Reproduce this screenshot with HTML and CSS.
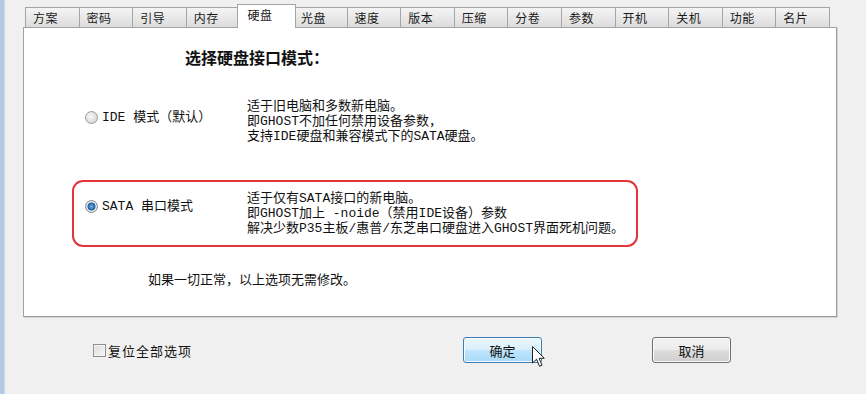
FILE: index.html
```html
<!DOCTYPE html>
<html lang="zh-CN">
<head>
<meta charset="utf-8">
<title>硬盘</title>
<link rel="stylesheet" href="styles.css">
</head>
<body>
<div class="frame">
  <div class="tabs">
    <div class="tab">方案</div>
    <div class="tab">密码</div>
    <div class="tab">引导</div>
    <div class="tab">内存</div>
    <div class="tab selected">硬盘</div>
    <div class="tab">光盘</div>
    <div class="tab">速度</div>
    <div class="tab">版本</div>
    <div class="tab">压缩</div>
    <div class="tab">分卷</div>
    <div class="tab">参数</div>
    <div class="tab">开机</div>
    <div class="tab">关机</div>
    <div class="tab">功能</div>
    <div class="tab">名片</div>
  </div>
  <div class="panel">
    <h1 class="title">选择硬盘接口模式：</h1>
    <div class="option ide">
      <div class="choice"><span class="radio"></span><span class="label">IDE 模式（默认）</span></div>
      <div class="desc">适于旧电脑和多数新电脑。<br>即GHOST不加任何禁用设备参数，<br>支持IDE硬盘和兼容模式下的SATA硬盘。</div>
    </div>
    <div class="option sata">
      <div class="choice"><span class="radio checked"></span><span class="label">SATA 串口模式</span></div>
      <div class="desc">适于仅有SATA接口的新电脑。<br>即GHOST加上 -noide（禁用IDE设备）参数<br>解决少数P35主板/惠普/东芝串口硬盘进入GHOST界面死机问题。</div>
    </div>
    <p class="note">如果一切正常，以上选项无需修改。</p>
  </div>
  <div class="footer">
    <label class="check"><span class="box"></span><span>复位全部选项</span></label>
    <button class="btn hover">确定</button>
    <span></span>
    <button class="btn">取消</button>
  </div>
  <svg class="cursor" width="14" height="22" viewBox="0 0 14 22"><path d="M0.5 0.5 L0.5 17 L4.6 13.2 L7.5 20.3 L10 19.2 L7.1 12.3 L12.3 12.3 Z" fill="#fff" stroke="#222" stroke-width="1" stroke-linejoin="round"/></svg>
</div>
</body>
</html>
```

FILE: styles.css
```css
html, body {
  margin: 0;
  padding: 0;
}
body {
  width: 866px;
  height: 394px;
  overflow: hidden;
  background: #f0f0f0;
  font-family: "Noto Sans CJK SC", "Noto Sans", sans-serif;
  color: #111;
}
.frame {
  position: relative;
  height: 394px;
  box-sizing: border-box;
  border-left: 4px solid #b3c9e4;
  box-shadow: inset 1px 0 0 #c9d8ea;
  padding-left: 19px;
}
.tabs {
  display: flex;
  align-items: flex-end;
  height: 27px;
  margin-left: 2px;
  position: relative;
  z-index: 2;
}
.tab {
  box-sizing: border-box;
  width: 54.6px;
  height: 20px;
  margin-right: -1px;
  border: 1px solid #a5a5a5;
  border-bottom: none;
  background: linear-gradient(#f4f4f4, #e6e6e6 60%, #dcdcdc);
  font-size: 12px;
  letter-spacing: 0.5px;
  line-height: 19px;
  padding-left: 7px;
  color: #1a1a1a;
}
.tab.selected {
  position: relative;
  width: 58.6px;
  height: 24px;
  margin-left: -2px;
  margin-right: -3px;
  margin-bottom: -1px;
  background: #fff;
  line-height: 19px;
  padding-left: 9px;
}
.panel {
  position: relative;
  z-index: 1;
  box-sizing: border-box;
  width: 814px;
  height: 290px;
  background: #fff;
  border: 1px solid #a3a3a3;
  border-right-color: #9a9a9a;
  border-bottom-color: #9a9a9a;
  box-shadow: 1px 1px 0 #d6d6d6;
  padding-top: 19px;
}
.title {
  margin: 0 0 32px 161px;
  font-size: 16px;
  font-weight: bold;
  line-height: 20px;
  letter-spacing: 0;
}
.option {
  display: flex;
  font-family: "Liberation Mono", "Noto Sans CJK SC", monospace;
  font-size: 13px;
}
.choice {
  display: flex;
  align-items: center;
  height: 15px;
  gap: 4px;
}
.label {
  line-height: 15px;
  white-space: nowrap;
}
.desc {
  line-height: 15px;
  white-space: nowrap;
}
.ide {
  margin-left: 61px;
}
.ide .choice {
  width: 162px;
  margin-top: 11px;
}
.sata {
  box-sizing: border-box;
  width: 566px;
  margin: 36px 0 0 48px;
  padding: 9px 0 9px 11px;
  border: 2px solid #e3343c;
  border-radius: 11px;
}
.sata .choice {
  width: 162px;
  margin-top: 8px;
}
.radio {
  box-sizing: border-box;
  width: 13px;
  height: 13px;
  flex: none;
  border-radius: 50%;
  border: 1px solid #9a9a9a;
  background: radial-gradient(circle at 40% 40%, #f6f6f6, #dadada 70%, #cfcfcf);
}
.radio.checked {
  border-color: #8a8f96;
  background: radial-gradient(circle, #6fb2e6 0, #2a72b8 3px, #1d5a9a 3.6px, #e8e8e8 4.4px, #cfd3d8 6px);
}
.note {
  margin: 24px 0 0 124px;
  font-size: 13px;
  line-height: 16px;
}
.footer {
  display: grid;
  grid-template-columns: 370px 79px 110px 79px;
  align-items: center;
  margin: 20px 0 0 70px;
  height: 26px;
}
.check {
  display: flex;
  align-items: center;
  gap: 2px;
  font-size: 13px;
  letter-spacing: 1px;
}
.box {
  box-sizing: border-box;
  width: 13px;
  height: 13px;
  border: 1px solid #8e8f8f;
  background: linear-gradient(135deg, #dcdcdc, #f6f6f6);
  box-shadow: inset 0 0 0 1px #f4f4f4;
}
.btn {
  box-sizing: border-box;
  height: 26px;
  border: 1px solid #707070;
  border-radius: 3px;
  background: linear-gradient(#f3f3f3 0, #ebebeb 50%, #dddddd 51%, #cfcfcf 100%);
  box-shadow: inset 0 0 0 1px #fbfbfb;
  font-family: "Noto Sans CJK SC", sans-serif;
  font-size: 13px;
  color: #111;
  padding: 0;
}
.btn.hover {
  border-color: #3c7fb1;
  background: linear-gradient(#eaf6fd 0, #d9f0fc 50%, #bee6fd 51%, #a7d9f5 100%);
  box-shadow: inset 0 0 0 1px #f2fbff;
}
.cursor {
  position: absolute;
  left: 528px;
  top: 346px;
}
```
